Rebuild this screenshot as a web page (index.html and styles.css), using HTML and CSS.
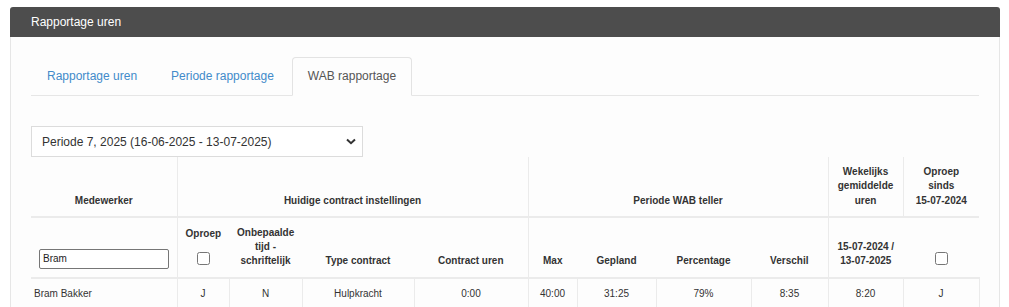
FILE: index.html
```html
<!DOCTYPE html>
<html lang="nl">
<head>
    <meta charset="UTF-8">
    <meta name="viewport" content="width=device-width, initial-scale=1.0">
    <title>Rapportage uren</title>
    <link rel="stylesheet" href="styles.css">
</head>
<body>
    <div class="panel">
        <div class="panel-heading">Rapportage uren</div>
        <div class="panel-body">
            <ul class="tabs">
                <li><a href="#">Rapportage uren</a></li>
                <li><a href="#">Periode rapportage</a></li>
                <li class="active"><a href="#">WAB rapportage</a></li>
            </ul>

            <div class="select-wrap">
                <select class="period">
                    <option>Periode 7, 2025 (16-06-2025 - 13-07-2025)</option>
                </select>
                <svg class="chevron" width="10" height="7" viewBox="0 0 10 7">
                    <path d="M1 1.5 L5 5.2 L9 1.5" fill="none" stroke="#333" stroke-width="2"/>
                </svg>
            </div>

            <table class="wab">
                <colgroup>
                    <col style="width:146px"><col style="width:52px"><col style="width:73px">
                    <col style="width:112px"><col style="width:114px"><col style="width:49px">
                    <col style="width:79px"><col style="width:95px"><col style="width:77px">
                    <col style="width:75px"><col style="width:76px">
                </colgroup>
                <thead>
                    <tr class="group-row">
                        <th class="sep">Medewerker</th>
                        <th class="sep" colspan="4">Huidige contract instellingen</th>
                        <th class="sep" colspan="4">Periode WAB teller</th>
                        <th class="sep">Wekelijks gemiddelde uren</th>
                        <th>Oproep sinds <span class="nowrap">15-07-2024</span></th>
                    </tr>
                    <tr class="field-row">
                        <th class="sep"><input type="text" class="search" value="Bram"></th>
                        <th><span class="label">Oproep</span><input type="checkbox" class="check check-low"></th>
                        <th>Onbepaalde tijd - schriftelijk</th>
                        <th>Type contract</th>
                        <th class="sep">Contract uren</th>
                        <th>Max</th>
                        <th>Gepland</th>
                        <th>Percentage</th>
                        <th class="sep">Verschil</th>
                        <th><span class="nowrap">15-07-2024 /</span> <span class="nowrap">13-07-2025</span></th>
                        <th><input type="checkbox" class="check"></th>
                    </tr>
                </thead>
                <tbody>
                    <tr>
                        <td class="name">Bram Bakker</td>
                        <td>J</td>
                        <td>N</td>
                        <td>Hulpkracht</td>
                        <td>0:00</td>
                        <td>40:00</td>
                        <td>31:25</td>
                        <td>79%</td>
                        <td>8:35</td>
                        <td>8:20</td>
                        <td class="last">J</td>
                    </tr>
                </tbody>
            </table>
        </div>
    </div>
</body>
</html>
```

FILE: styles.css
```css
* {
    box-sizing: border-box;
    margin: 0;
    padding: 0;
}

body {
    font-family: "Liberation Sans", Arial, sans-serif;
    color: #333;
    background: #fff;
    padding: 7px 9px 0 10px;
}

.panel {
    width: 990px;
}

.panel-heading {
    background: #4d4d4d;
    color: #fff;
    font-size: 12px;
    height: 30px;
    line-height: 30px;
    padding: 0 21px;
    border-radius: 3px 3px 0 0;
}

.panel-body {
    background: #fdfdfd;
    border-left: 1px solid #e6e6e6;
    border-right: 1px solid #e6e6e6;
    padding: 20px 20px 40px;
}

/* Tabs */
.tabs {
    list-style: none;
    display: flex;
    border-bottom: 1px solid #e6e6e6;
}

.tabs li {
    margin-bottom: -1px;
    margin-right: 2px;
}

.tabs a {
    display: block;
    font-size: 12px;
    line-height: 16px;
    padding: 10px 15px 11px;
    border: 1px solid transparent;
    border-radius: 4px 4px 0 0;
    color: #428bca;
    text-decoration: none;
}

.tabs .active a {
    color: #555;
    background: #fdfdfd;
    border-color: #e3e3e3 #e3e3e3 transparent;
}

/* Period select */
.select-wrap {
    position: relative;
    width: 332px;
    margin-top: 30px;
}

.period {
    display: block;
    width: 100%;
    height: 31px;
    padding: 0 30px 0 10px;
    font-family: inherit;
    font-size: 12px;
    color: #333;
    background: #fff;
    border: 1px solid #dcdcdc;
    border-radius: 0;
    appearance: none;
    -webkit-appearance: none;
}

.chevron {
    position: absolute;
    right: 7px;
    top: 12px;
}

/* Table */
.wab {
    width: 948px;
    table-layout: fixed;
    border-collapse: collapse;
    font-size: 10px;
    line-height: 14.3px;
}

.wab th {
    font-weight: bold;
    text-align: center;
    vertical-align: bottom;
    padding: 8px;
}

.wab thead tr {
    border-bottom: 2px solid #ebebeb;
}

.wab th.sep {
    border-right: 1px solid #ebebeb;
}

.wab .label {
    display: block;
}

.nowrap {
    white-space: nowrap;
}

.check {
    display: block;
    width: 13px;
    height: 13px;
    margin: 0 auto 4px;
}

.check-low {
    margin-top: 10px;
}

.search {
    display: block;
    width: 130px;
    height: 20px;
    padding: 1px 3px;
    font-family: inherit;
    font-size: 10px;
    color: #222;
    border: 1px solid #767676;
    border-radius: 2px;
    background: #fff;
}

.wab td {
    text-align: center;
    vertical-align: middle;
    padding: 8px;
    border-left: 1px solid #ebebeb;
}

.wab td.name {
    text-align: left;
    padding-left: 3px;
    border-left: none;
}

.wab td.last {
    border-right: 1px solid #ebebeb;
}
```
